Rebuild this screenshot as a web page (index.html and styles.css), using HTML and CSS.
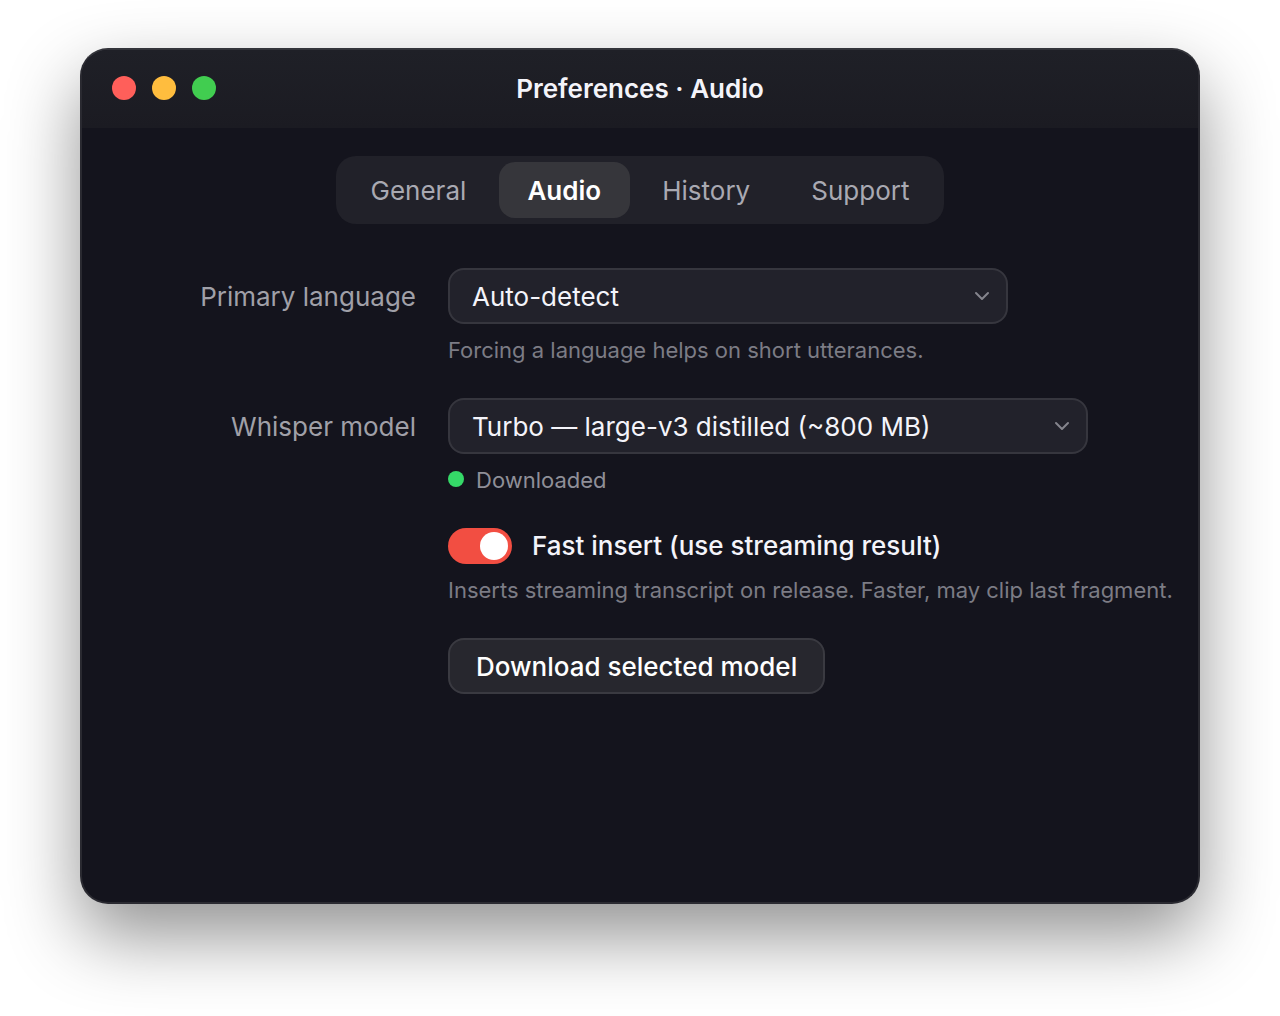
FILE: index.html
```
<!DOCTYPE html>
<html lang="en">
<head>
    <meta charset="UTF-8">
    <meta name="viewport" content="width=device-width, initial-scale=1.0">
    <title>Preferences · Audio</title>
    <link rel="stylesheet" href="styles.css">
</head>
<body>
    <div class="window">
        <header class="titlebar">
            <div class="lights">
                <button class="light close" aria-label="Close"></button>
                <button class="light minimize" aria-label="Minimize"></button>
                <button class="light expand" aria-label="Zoom"></button>
            </div>
            <h1>Preferences · Audio</h1>
        </header>
        <nav class="tabs">
            <button>General</button>
            <button class="active">Audio</button>
            <button>History</button>
            <button>Support</button>
        </nav>
        <form class="settings">
            <label class="name" for="language">Primary language</label>
            <div class="field">
                <div class="select">
                    <select id="language">
                        <option>Auto-detect</option>
                    </select>
                    <svg viewBox="0 0 20 20"><path d="M4 7l6 6 6-6"/></svg>
                </div>
                <p class="hint">Forcing a language helps on short utterances.</p>
            </div>

            <label class="name" for="model">Whisper model</label>
            <div class="field">
                <div class="select wide">
                    <select id="model">
                        <option>Turbo — large-v3 distilled (~800 MB)</option>
                    </select>
                    <svg viewBox="0 0 20 20"><path d="M4 7l6 6 6-6"/></svg>
                </div>
                <p class="hint status">Downloaded</p>
            </div>

            <div class="field">
                <label class="toggle" for="fast-insert">
                    <input type="checkbox" id="fast-insert" checked>
                    Fast insert (use streaming result)
                </label>
                <p class="hint">Inserts streaming transcript on release. Faster, may clip last fragment.</p>
            </div>

            <div class="field">
                <button type="button" class="download">Download selected model</button>
            </div>
        </form>
    </div>
</body>
</html>
```
FILE: styles.css
```
* {
    box-sizing: border-box;
}
body {
    margin: 0;
    min-height: 100vh;
    padding: 48px 80px 112px;
    display: flex;
    background: #fff;
    color: #f4f4fa;
    font-family: Inter, sans-serif;
    font-size: 26px;
    line-height: 32px;
}
button, select {
    font: inherit;
    color: inherit;
}
button {
    cursor: pointer;
}
.window {
    flex: 1;
    min-width: 0;
    border: 2px solid #2a2a31;
    border-top-color: #33343a;
    border-radius: 28px;
    background: #14141d;
    overflow: hidden;
    box-shadow: 0 32px 72px rgba(0, 0, 0, 0.43);
}
.titlebar {
    height: 78px;
    padding: 0 30px;
    display: grid;
    grid-template-columns: 1fr auto 1fr;
    align-items: center;
    background: linear-gradient(#1f2027, #1b1b22);
}
.titlebar h1 {
    margin: 0;
    font-size: 26px;
    font-weight: 600;
}
.lights {
    display: flex;
    gap: 16px;
    padding-bottom: 2px;
}
.light {
    width: 24px;
    height: 24px;
    padding: 0;
    border: none;
    border-radius: 50%;
}
.close {
    background: #ff5f5a;
}
.minimize {
    background: #ffbd3e;
}
.expand {
    background: #41cd50;
}
.tabs {
    width: 608px;
    max-width: 100%;
    margin: 28px auto 44px;
    padding: 6px;
    display: flex;
    gap: 4px;
    border-radius: 20px;
    background: #212129;
}
.tabs button {
    flex: auto;
    height: 56px;
    padding: 2px 28px 0;
    border: none;
    border-radius: 16px;
    background: none;
    color: #a9a9b2;
}
.tabs .active {
    background: #36363b;
    color: #fff;
    font-weight: 600;
}
.settings {
    padding: 0 22px 0 78px;
    display: grid;
    grid-template-columns: 256px minmax(0, 1fr);
    column-gap: 32px;
    row-gap: 32px;
}
.name {
    padding-top: 13px;
    color: #a0a0a8;
    text-align: right;
}
.field {
    grid-column: 2;
}
.select {
    position: relative;
    max-width: 560px;
}
.wide {
    max-width: 640px;
}
.select select {
    appearance: none;
    display: block;
    width: 100%;
    height: 56px;
    padding: 2px 48px 0 22px;
    border: 2px solid #36363e;
    border-radius: 16px;
    background: #22222b;
}
.select svg {
    position: absolute;
    top: 18px;
    right: 16px;
    width: 20px;
    height: 20px;
    fill: none;
    stroke: #85858d;
    stroke-width: 2;
    stroke-linecap: round;
    stroke-linejoin: round;
    pointer-events: none;
}
.hint {
    margin: 12px 0 0;
    padding-bottom: 2px;
    color: #7c7c85;
    font-size: 22px;
    line-height: 28px;
}
.status {
    display: flex;
    align-items: center;
    gap: 12px;
    color: #8f8f98;
}
.status::before {
    content: "";
    width: 16px;
    height: 16px;
    margin-bottom: 2px;
    border-radius: 50%;
    background: #35d968;
}
.toggle {
    display: flex;
    align-items: center;
    gap: 20px;
    line-height: 36px;
    font-weight: 500;
}
.toggle input {
    appearance: none;
    width: 64px;
    height: 36px;
    margin: 0;
    padding: 4px;
    border-radius: 18px;
    background: #3a3a40;
}
.toggle input::before {
    content: "";
    display: block;
    width: 28px;
    height: 28px;
    border-radius: 50%;
    background: #fff;
}
.toggle input:checked {
    background: #f24e42;
}
.toggle input:checked::before {
    margin-left: auto;
}
.download {
    height: 56px;
    padding: 2px 26px 0;
    border: 2px solid #3a3a41;
    border-radius: 16px;
    background: #27272e;
    color: #fff;
    font-weight: 500;
}
```
